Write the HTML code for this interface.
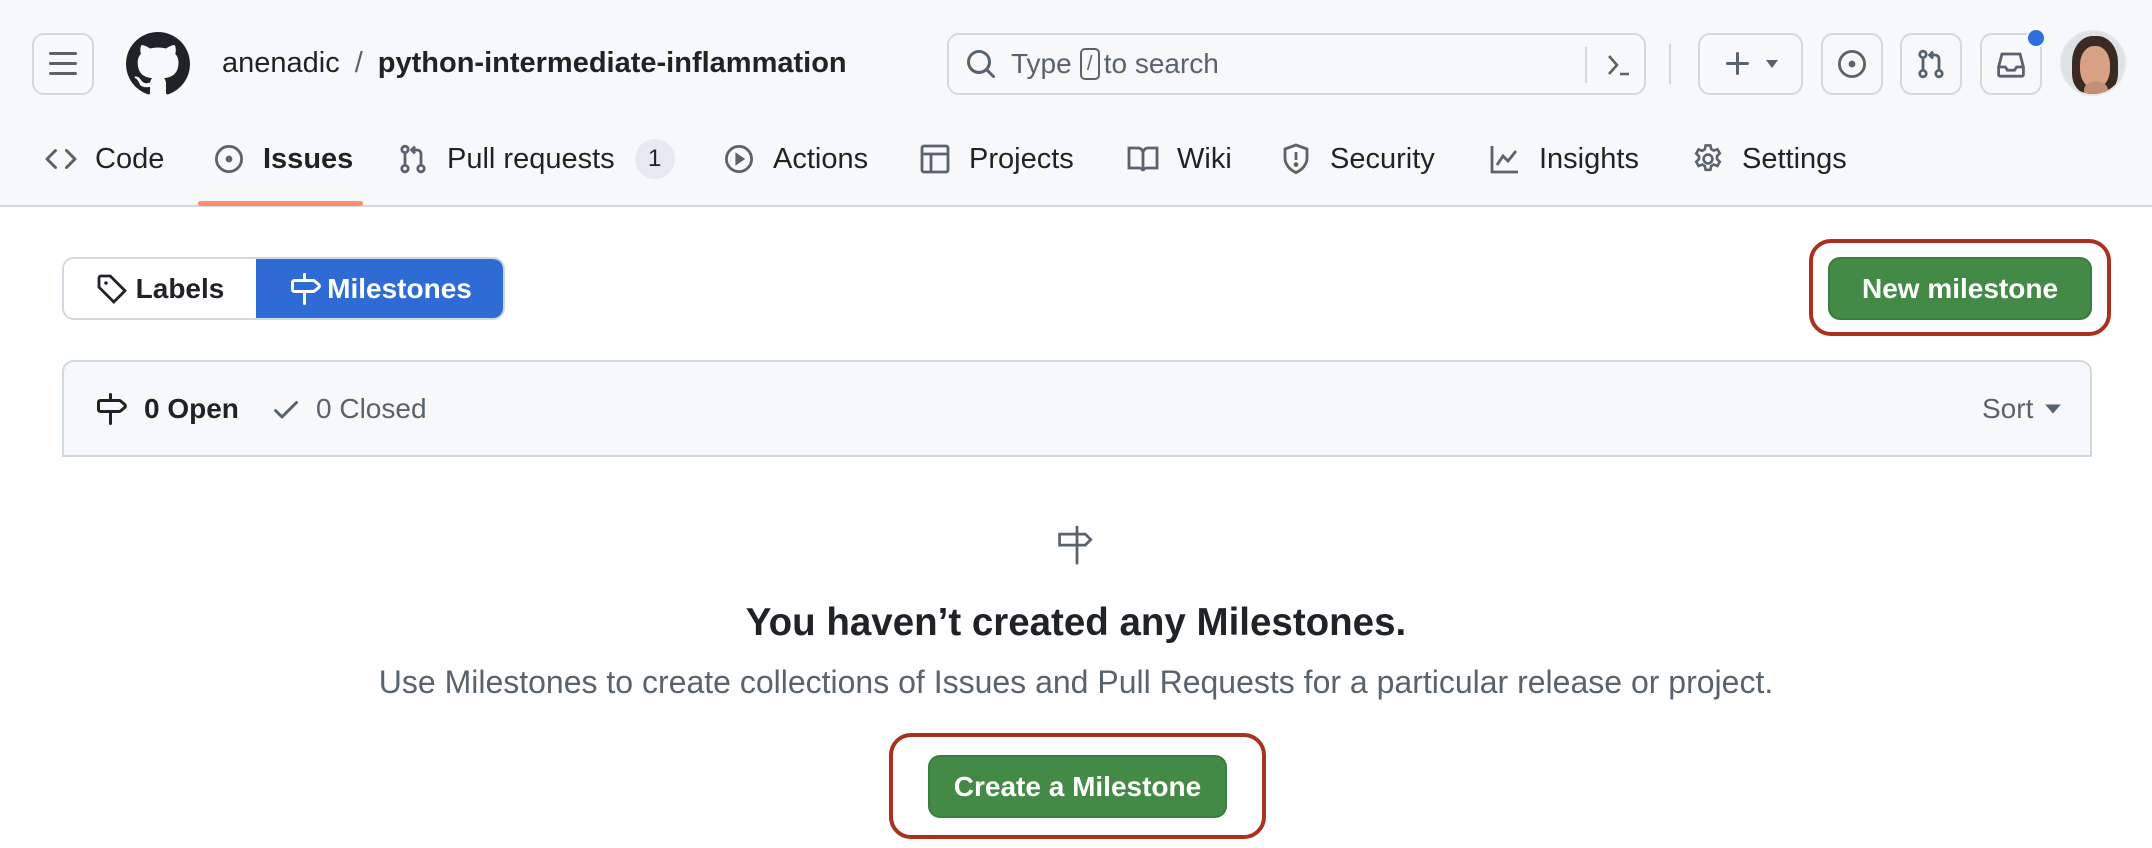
<!DOCTYPE html>
<html><head><meta charset="utf-8"><style>
*{box-sizing:border-box;margin:0;padding:0}
body{width:2152px;height:848px;overflow:hidden;background:#fff;font-family:"Liberation Sans",sans-serif;color:#1f2328;position:relative}
.a{position:absolute}
.hdr{left:0;top:0;width:2152px;height:207px;background:#f6f8fa;border-bottom:2px solid #d1d9e0}
.btn{position:absolute;border:2px solid #d1d9e0;border-radius:12px;background:#f6f8fa;display:flex;align-items:center;justify-content:center}
svg{display:block}
.tab{position:absolute;top:138px;height:42px;display:flex;align-items:center;font-size:29px;color:#1f2328}
.tab svg{margin-right:18px}
.ic{fill:#59636e}
.green{position:absolute;background:#438a47;border:2px solid #3b7d3f;border-radius:12px;color:#fff;font-weight:bold;font-size:28px;display:flex;align-items:center;justify-content:center}
.red{position:absolute;border:4px solid #a8321f;border-radius:22px}
</style></head><body>
<div class="a hdr"></div>
<div class="btn" style="left:32px;top:33px;width:62px;height:62px"><svg width="32" height="32" viewBox="0 0 16 16" class="ic"><path d="M1 2.75A.75.75 0 0 1 1.75 2h12.5a.75.75 0 0 1 0 1.5H1.75A.75.75 0 0 1 1 2.75Zm0 5A.75.75 0 0 1 1.75 7h12.5a.75.75 0 0 1 0 1.5H1.75A.75.75 0 0 1 1 7.75ZM1.75 12h12.5a.75.75 0 0 1 0 1.5H1.75a.75.75 0 0 1 0-1.5Z"/></svg></div>
<svg class="a" style="left:126px;top:32px" width="64" height="64" viewBox="0 0 16 16" fill="#1f2328"><path d="M8 0c4.42 0 8 3.58 8 8a8.013 8.013 0 0 1-5.45 7.59c-.4.08-.55-.17-.55-.38 0-.27.01-1.13.01-2.2 0-.75-.25-1.23-.54-1.48 1.78-.2 3.65-.88 3.65-3.95 0-.88-.31-1.59-.82-2.15.08-.2.36-1.02-.08-2.12 0 0-.67-.22-2.2.82-.64-.18-1.32-.27-2-.27-.68 0-1.36.09-2 .27-1.53-1.03-2.2-.82-2.2-.82-.44 1.1-.16 1.92-.08 2.12-.51.56-.82 1.28-.82 2.15 0 3.06 1.86 3.75 3.64 3.95-.23.2-.44.55-.51 1.07-.46.21-1.61.55-2.33-.66-.15-.24-.6-.83-1.23-.82-.67.01-.27.38.01.53.34.19.73.9.82 1.13.16.45.68 1.31 2.69.94 0 .67.01 1.3.01 1.49 0 .21-.15.45-.55.38A7.995 7.995 0 0 1 0 8c0-4.42 3.58-8 8-8Z"/></svg>
<div class="a" style="left:222px;top:45px;font-size:29px;line-height:36px;white-space:nowrap"><span>anenadic</span><span style="color:#59636e;margin:0 15px">/</span><span style="font-weight:bold">python-intermediate-inflammation</span></div>
<div class="btn" style="left:947px;top:33px;width:699px;height:62px;justify-content:flex-start;background:#f6f8fa">
<svg style="margin-left:16px" width="32" height="32" viewBox="0 0 16 16" class="ic"><path d="M10.68 11.74a6 6 0 0 1-7.922-8.982 6 6 0 0 1 8.982 7.922l3.04 3.04a.749.749 0 0 1-.326 1.275.749.749 0 0 1-.734-.215ZM11.5 7a4.499 4.499 0 1 0-8.997 0A4.499 4.499 0 0 0 11.5 7Z"/></svg>
<span style="margin-left:14px;font-size:28px;color:#59636e">Type</span><span style="margin:0 4px 0 8px;display:inline-block;width:20px;height:32px;border:2px solid #59636e;border-radius:5px;font-size:20px;line-height:28px;text-align:center;color:#59636e">/</span><span style="font-size:28px;color:#59636e">to search</span>
<div class="a" style="left:636px;top:12px;width:2px;height:36px;background:#d1d9e0"></div>
<svg class="a" style="left:654px;top:14px" width="32" height="32" viewBox="0 0 16 16" fill="none" stroke="#59636e" stroke-width="1.3"><path d="M3 3.5 7 8l-4 4.5M8.5 12.5H13"/></svg>
</div>
<div class="a" style="left:1669px;top:44px;width:2px;height:40px;background:#d1d9e0"></div>
<div class="btn" style="left:1698px;top:33px;width:105px;height:62px"><svg width="32" height="32" viewBox="0 0 16 16" class="ic"><path d="M7.75 2a.75.75 0 0 1 .75.75V7h4.25a.75.75 0 0 1 0 1.5H8.5v4.25a.75.75 0 0 1-1.5 0V8.5H2.75a.75.75 0 0 1 0-1.5H7V2.75A.75.75 0 0 1 7.75 2Z"/></svg><svg style="margin-left:10px" width="16" height="16" viewBox="0 0 16 16" class="ic"><path d="M2 4h12L8 12z"/></svg></div>
<div class="btn" style="left:1821px;top:33px;width:62px;height:62px"><svg width="32" height="32" viewBox="0 0 16 16" fill="none" stroke="#59636e" stroke-width="1.4"><circle cx="8" cy="8" r="6.3"/><circle cx="8" cy="8" r="1" fill="#59636e"/></svg></div>
<div class="btn" style="left:1900px;top:33px;width:62px;height:62px"><svg width="32" height="32" viewBox="0 0 16 16" fill="none" stroke="#59636e" stroke-width="1.4"><circle cx="4" cy="3.2" r="1.6"/><circle cx="4" cy="12.8" r="1.6"/><circle cx="12" cy="12.8" r="1.6"/><path d="M4 4.8v6.4M12 11.2V5.5a2 2 0 0 0-2-2H7.5M9 1.8 7.3 3.5 9 5.2"/></svg></div>
<div class="btn" style="left:1980px;top:33px;width:62px;height:62px"><svg width="32" height="32" viewBox="0 0 16 16" fill="none" stroke="#59636e" stroke-width="1.4"><path d="M1.8 9.5 3.5 3h9l1.7 6.5v3.8a.8.8 0 0 1-.8.8H2.6a.8.8 0 0 1-.8-.8ZM1.8 9.5h3.4l1 1.6h3.6l1-1.6h3.4"/></svg></div>
<div class="a" style="left:2026px;top:28px;width:20px;height:20px;border-radius:50%;background:#2f6ee0;border:2px solid #f6f8fa"></div>
<div class="a" style="left:2060px;top:30px;width:66px;height:66px;border-radius:50%;overflow:hidden;background:#dfe2e5;border:2px solid #e4e7ea">
<div class="a" style="left:10px;top:4px;width:46px;height:58px;border-radius:45% 45% 35% 35%;background:#3a2a22"></div>
<div class="a" style="left:18px;top:14px;width:30px;height:42px;border-radius:45%;background:#d9a184"></div>
<div class="a" style="left:22px;top:50px;width:24px;height:20px;border-radius:40%;background:#c48f74"></div>
</div>

<div class="tab" style="left:45px"><svg width="32" height="32" viewBox="0 0 16 16" class="ic"><path d="m11.28 3.22 4.25 4.25a.75.75 0 0 1 0 1.06l-4.25 4.25a.749.749 0 0 1-1.275-.326.749.749 0 0 1 .215-.734L13.94 8l-3.72-3.72a.749.749 0 0 1 .326-1.275.749.749 0 0 1 .734.215Zm-6.56 0a.751.751 0 0 1 1.042.018.751.751 0 0 1 .018 1.042L2.06 8l3.72 3.72a.749.749 0 0 1-.326 1.275.749.749 0 0 1-.734-.215L.47 8.53a.75.75 0 0 1 0-1.06Z"/></svg>Code</div>
<div class="tab" style="left:213px;font-weight:bold"><svg width="32" height="32" viewBox="0 0 16 16" fill="none" stroke="#59636e" stroke-width="1.4"><circle cx="8" cy="8" r="6.3"/><circle cx="8" cy="8" r="1" fill="#59636e"/></svg>Issues</div>
<div class="a" style="left:198px;top:201px;width:165px;height:5px;background:#fd8c73;border-radius:3px"></div>
<div class="tab" style="left:397px"><svg width="32" height="32" viewBox="0 0 16 16" fill="none" stroke="#59636e" stroke-width="1.4"><circle cx="4" cy="3.2" r="1.6"/><circle cx="4" cy="12.8" r="1.6"/><circle cx="12" cy="12.8" r="1.6"/><path d="M4 4.8v6.4M12 11.2V5.5a2 2 0 0 0-2-2H7.5M9 1.8 7.3 3.5 9 5.2"/></svg>Pull requests<span style="margin-left:20px;display:inline-block;width:40px;height:40px;border-radius:20px;background:#e6e9ed;font-size:24px;text-align:center;line-height:40px">1</span></div>
<div class="tab" style="left:723px"><svg width="32" height="32" viewBox="0 0 16 16" fill="none" stroke="#59636e" stroke-width="1.4"><circle cx="8" cy="8" r="6.3"/><path d="M6.6 5.4v5.2L10.4 8z" fill="#59636e" stroke-width=".8"/></svg>Actions</div>
<div class="tab" style="left:919px"><svg width="32" height="32" viewBox="0 0 16 16" fill="none" stroke="#59636e" stroke-width="1.4"><rect x="1.5" y="1.5" width="13" height="13" rx="1"/><path d="M1.5 5.5h13M6 5.5v9"/></svg>Projects</div>
<div class="tab" style="left:1127px"><svg width="32" height="32" viewBox="0 0 16 16" fill="none" stroke="#59636e" stroke-width="1.4"><path d="M1 2.5h4.5A2.5 2.5 0 0 1 8 5v9a2 2 0 0 0-2-1.5H1ZM15 2.5h-4.5A2.5 2.5 0 0 0 8 5v9a2 2 0 0 1 2-1.5h5Z"/></svg>Wiki</div>
<div class="tab" style="left:1280px"><svg width="32" height="32" viewBox="0 0 16 16" fill="none" stroke="#59636e" stroke-width="1.4"><path d="M8 1 2.5 3v4.5c0 3.5 2.7 6 5.5 7.3 2.8-1.3 5.5-3.8 5.5-7.3V3Z"/><path d="M8 4.5v4"/><circle cx="8" cy="10.8" r=".5" fill="#59636e"/></svg>Security</div>
<div class="tab" style="left:1489px"><svg width="32" height="32" viewBox="0 0 16 16" fill="none" stroke="#59636e" stroke-width="1.4"><path d="M1.5 1.5v13h13M4 11l3-4.5 2.5 2.5 4-5"/></svg>Insights</div>
<div class="tab" style="left:1692px"><svg width="32" height="32" viewBox="0 0 16 16" fill="none" stroke="#59636e" stroke-width="1.3"><circle cx="8" cy="8" r="2.2"/><path d="M6.8 1.2h2.4l.4 1.9 1.3.7 1.8-.7 1.2 2.1-1.4 1.3v1.6l1.4 1.3-1.2 2.1-1.8-.7-1.3.7-.4 1.9H6.8l-.4-1.9-1.3-.7-1.8.7-1.2-2.1 1.4-1.3V6.6L2.1 5.3l1.2-2.1 1.8.7 1.3-.7Z"/></svg>Settings</div>

<div class="a" style="left:62px;top:257px;width:443px;height:63px;border:2px solid #d1d9e0;border-radius:12px;overflow:hidden;display:flex">
<div style="width:192px;display:flex;align-items:center;justify-content:center;font-size:28px;font-weight:bold;background:#fff"><svg style="margin-right:8px" width="32" height="32" viewBox="0 0 16 16" fill="none" stroke="#1f2328" stroke-width="1.4"><path d="M1.5 2.5a1 1 0 0 1 1-1h4.6l7.4 7.4-5.6 5.6-7.4-7.4Z"/><circle cx="5" cy="5" r=".9" fill="#1f2328" stroke="none"/></svg>Labels</div>
<div style="flex:1;background:#2f6bd5;display:flex;align-items:center;justify-content:center;color:#fff;font-size:28px;font-weight:bold;margin:-2px -2px -2px 0"><svg style="margin-right:6px" width="32" height="32" viewBox="0 0 16 16" fill="#fff"><path d="M7.75 0a.75.75 0 0 1 .75.75V3h3.634c.414 0 .814.147 1.13.414l2.07 1.75a1.75 1.75 0 0 1 0 2.672l-2.07 1.75a1.75 1.75 0 0 1-1.13.414H8.5v5.25a.75.75 0 0 1-1.5 0V10H2.75A1.75 1.75 0 0 1 1 8.25v-3.5C1 3.784 1.784 3 2.75 3H7V.75A.75.75 0 0 1 7.75 0Zm4.384 8.5a.25.25 0 0 0 .161-.06l2.07-1.75a.25.25 0 0 0 0-.38l-2.07-1.75a.25.25 0 0 0-.161-.06H2.75a.25.25 0 0 0-.25.25v3.5c0 .138.112.25.25.25h9.384Z"/></svg>Milestones</div>
</div>

<div class="red" style="left:1809px;top:239px;width:302px;height:97px"></div>
<div class="green" style="left:1828px;top:257px;width:264px;height:63px">New milestone</div>

<div class="a" style="left:62px;top:360px;width:2030px;height:97px;background:#f6f8fa;border:2px solid #d1d9e0;border-radius:12px 12px 0 0"></div>
<svg class="a" style="left:95px;top:393px" width="32" height="32" viewBox="0 0 16 16" fill="#1f2328"><path d="M7.75 0a.75.75 0 0 1 .75.75V3h3.634c.414 0 .814.147 1.13.414l2.07 1.75a1.75 1.75 0 0 1 0 2.672l-2.07 1.75a1.75 1.75 0 0 1-1.13.414H8.5v5.25a.75.75 0 0 1-1.5 0V10H2.75A1.75 1.75 0 0 1 1 8.25v-3.5C1 3.784 1.784 3 2.75 3H7V.75A.75.75 0 0 1 7.75 0Zm4.384 8.5a.25.25 0 0 0 .161-.06l2.07-1.75a.25.25 0 0 0 0-.38l-2.07-1.75a.25.25 0 0 0-.161-.06H2.75a.25.25 0 0 0-.25.25v3.5c0 .138.112.25.25.25h9.384Z"/></svg>
<div class="a" style="left:144px;top:391px;font-size:28px;font-weight:bold;line-height:36px">0 Open</div>
<svg class="a" style="left:270px;top:393px" width="32" height="32" viewBox="0 0 16 16" fill="#59636e"><path d="M13.78 4.22a.75.75 0 0 1 0 1.06l-7.25 7.25a.75.75 0 0 1-1.06 0L2.22 9.28a.751.751 0 0 1 .018-1.042.751.751 0 0 1 1.042-.018L6 10.94l6.72-6.72a.75.75 0 0 1 1.06 0Z"/></svg>
<div class="a" style="left:316px;top:391px;font-size:28px;color:#59636e;line-height:36px">0 Closed</div>
<div class="a" style="left:1982px;top:391px;font-size:28px;color:#59636e;line-height:36px">Sort</div>
<svg class="a" style="left:2044px;top:402px" width="18" height="14" viewBox="0 0 16 12" fill="#59636e"><path d="M1 2h14L8 10z"/></svg>

<svg class="a" style="left:1055px;top:524px" width="44" height="44" viewBox="0 0 24 24" fill="none" stroke="#59636e" stroke-width="1.5"><path d="M12 1v21M2.5 5.5h14l3 3-3 3h-14Z"/></svg>
<div class="a" style="left:0;top:598px;width:2152px;text-align:center;font-size:38.5px;font-weight:bold;line-height:50px">You haven’t created any Milestones.</div>
<div class="a" style="left:0;top:662px;width:2152px;text-align:center;font-size:32px;color:#59636e;line-height:40px">Use Milestones to create collections of Issues and Pull Requests for a particular release or project.</div>
<div class="red" style="left:889px;top:733px;width:377px;height:106px"></div>
<div class="green" style="left:928px;top:755px;width:299px;height:63px">Create a Milestone</div>
</body></html>
